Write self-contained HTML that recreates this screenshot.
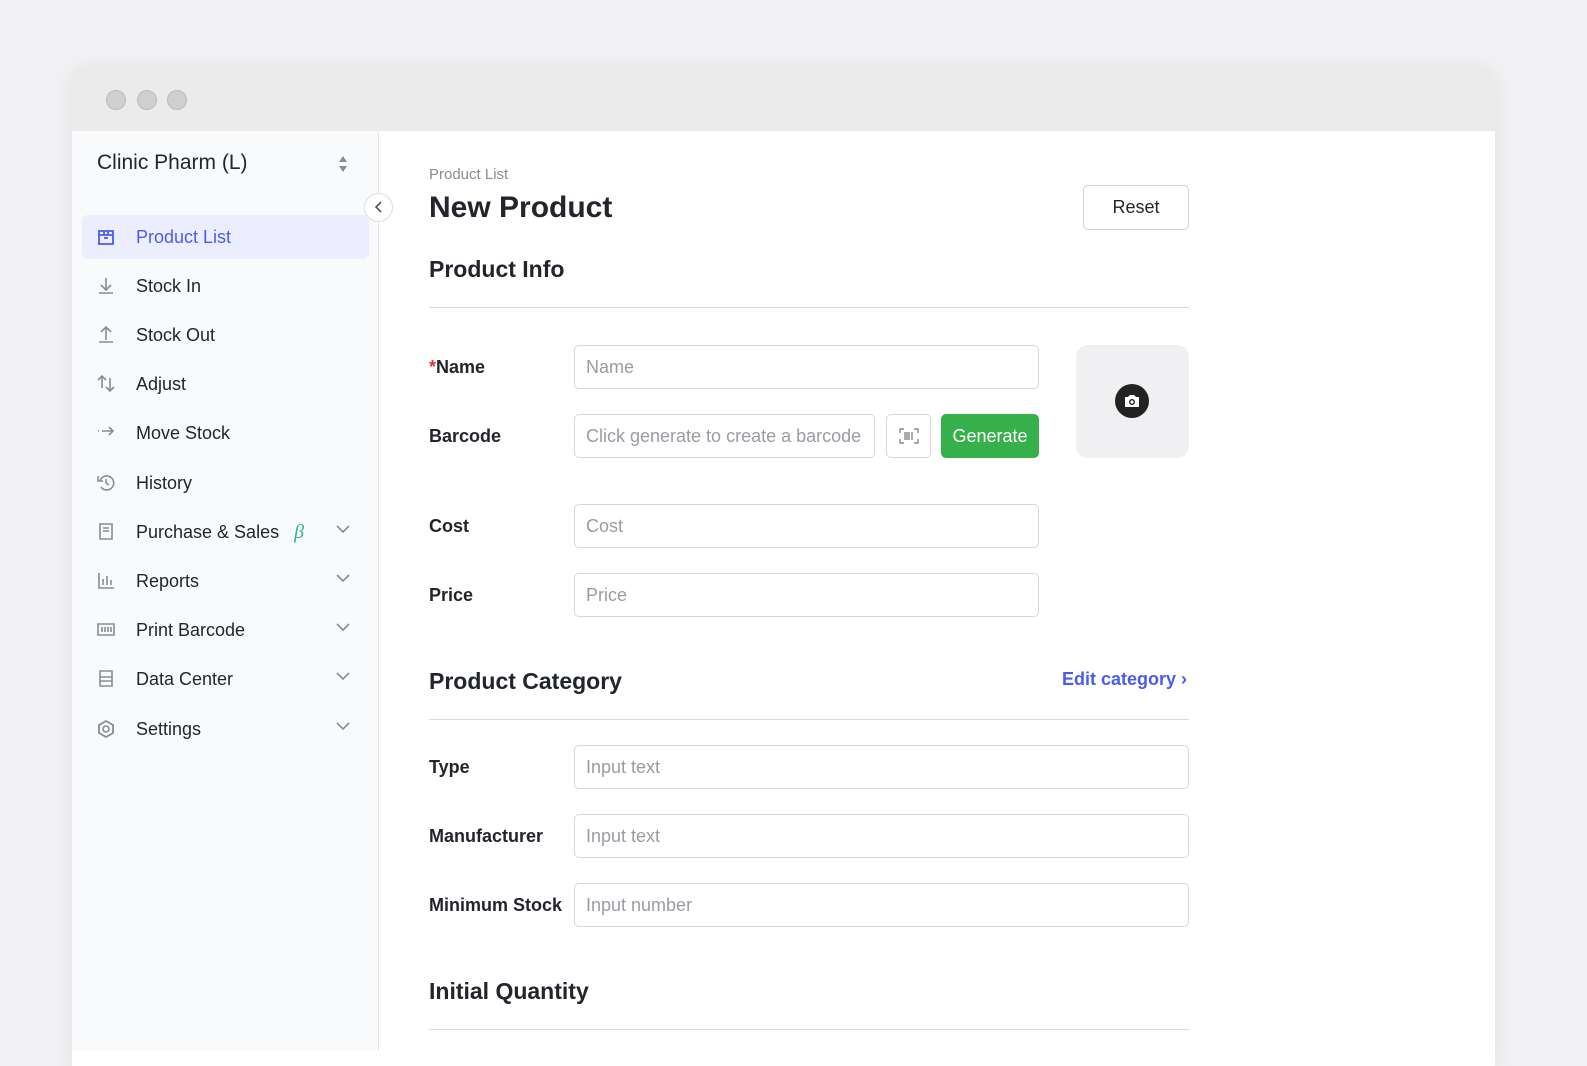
<!DOCTYPE html>
<html><head><meta charset="utf-8"><style>
*{margin:0;padding:0;box-sizing:border-box}
body{width:1587px;height:1051px;background:#f2f2f4;font-family:"Liberation Sans",sans-serif;color:#1f2229;position:relative;overflow:hidden}
.win{position:absolute;left:72px;top:66px;width:1423px;height:1000px;background:#fff;border-radius:14px 14px 0 0;box-shadow:0 4px 24px rgba(0,0,0,.08);overflow:hidden}
.tb{height:65px;background:#ebebeb;position:relative}
.dot{position:absolute;top:24px;width:20px;height:20px;border-radius:50%;background:#d0cece;border:1px solid #bbb}
.side{position:absolute;left:0;top:65px;width:307px;bottom:0;background:#f9fafc;border-right:1px solid #e6e6ea}
.a{position:absolute}
.nav{position:absolute;left:10px;width:287px;height:44px;display:flex;align-items:center;font-size:18px;color:#22252b}
.nav .ic{position:absolute;left:14px;top:12px;width:20px;height:20px}
.nav .t{position:absolute;left:54px}
.nav .chev{position:absolute;left:254px;top:14px}
.act{background:#eceefd;border-radius:6px;color:#4a5cf0}
.lbl{position:absolute;left:429px;font-size:18px;font-weight:bold;color:#22252b}
.inp{position:absolute;height:44px;border:1.5px solid #d6d6dc;border-radius:5px;font-size:18px;color:#9a9ca4;padding-left:11px;display:flex;align-items:center;background:#fff}
.hr{position:absolute;left:429px;width:760px;height:1px;background:#dcdce0}
.h2{position:absolute;left:429px;font-size:23px;font-weight:bold;color:#22252b}
</style></head><body>
<div class="win">
 <div class="tb"><div class="dot" style="left:34px"></div><div class="dot" style="left:65px"></div><div class="dot" style="left:95px"></div></div>
</div>
<div class="side" style="left:72px;top:131px;height:920px;position:absolute"></div>
<div class="a" style="left:97px;top:151px;font-size:21px;color:#22252b">Clinic Pharm (L)</div>
<svg class="a" style="left:337px;top:155px" width="12" height="18"><path d="M6 1L10 7H2Z M6 17L10 11H2Z" fill="#8a8c95"/></svg>
<div class="a" style="left:364px;top:193px;width:29px;height:29px;border-radius:50%;background:#fff;border:1px solid #ddd"></div>
<svg class="a" style="left:372px;top:200px" width="14" height="14"><path d="M9 2L4 7L9 12" stroke="#555" stroke-width="1.6" fill="none"/></svg>

<div class="nav act" style="left:82px;top:215px"><svg class="ic" viewBox="0 0 20 20"><path d="M3 4h14v13H3z M3 8h14 M8 4v4h4V4 M8 11h4" stroke="#4a5cf0" stroke-width="1.8" fill="none"/></svg><span class="t" style="color:#4a5cf0">Product List</span></div>
<div class="nav" style="left:82px;top:264px"><svg class="ic" viewBox="0 0 20 20"><path d="M10 2v11 M5 9l5 5 5-5 M3 17h14" stroke="#8a8c95" stroke-width="1.6" fill="none"/></svg><span class="t">Stock In</span></div>
<div class="nav" style="left:82px;top:313px"><svg class="ic" viewBox="0 0 20 20"><path d="M10 15V3 M5 7l5-5 5 5 M3 17h14" stroke="#8a8c95" stroke-width="1.6" fill="none"/></svg><span class="t">Stock Out</span></div>
<div class="nav" style="left:82px;top:362px"><svg class="ic" viewBox="0 0 20 20"><path d="M6 14V2 M2 6l4-4 4 4 M14 4v13 M10 13l4 4 4-4" stroke="#8a8c95" stroke-width="1.6" fill="none"/></svg><span class="t">Adjust</span></div>
<div class="nav" style="left:82px;top:411px"><svg class="ic" viewBox="0 0 20 20"><path d="M2 8h1 M6 8h11 M13 4l4 4-4 4" stroke="#8a8c95" stroke-width="1.6" fill="none"/></svg><span class="t">Move Stock</span></div>
<div class="nav" style="left:82px;top:461px"><svg class="ic" viewBox="0 0 20 20"><path d="M4 8a7 7 0 1 1 1 6 M2 3v5h5 M10 6v4l3 2" stroke="#8a8c95" stroke-width="1.6" fill="none"/></svg><span class="t">History</span></div>
<div class="nav" style="left:82px;top:510px"><svg class="ic" viewBox="0 0 20 20"><path d="M4 2h12v15H4z M7 6h6 M7 9h6" stroke="#8a8c95" stroke-width="1.6" fill="none"/></svg><span class="t">Purchase &amp; Sales <i style="color:#2fb58a;font-family:'Liberation Serif',serif;font-size:20px;margin-left:10px">β</i></span><svg class="chev" width="14" height="10"><path d="M1 2l6 6 6-6" stroke="#8a8c95" stroke-width="1.6" fill="none"/></svg></div>
<div class="nav" style="left:82px;top:559px"><svg class="ic" viewBox="0 0 20 20"><path d="M3 2v15h15 M7 8v6 M11 5v9 M15 9v5" stroke="#8a8c95" stroke-width="1.6" fill="none"/></svg><span class="t">Reports</span><svg class="chev" width="14" height="10"><path d="M1 2l6 6 6-6" stroke="#8a8c95" stroke-width="1.6" fill="none"/></svg></div>
<div class="nav" style="left:82px;top:608px"><svg class="ic" viewBox="0 0 20 20"><path d="M2 4h16v11H2z M6 7v5 M9 7v5 M12 7v5 M15 7v5" stroke="#8a8c95" stroke-width="1.6" fill="none"/></svg><span class="t">Print Barcode</span><svg class="chev" width="14" height="10"><path d="M1 2l6 6 6-6" stroke="#8a8c95" stroke-width="1.6" fill="none"/></svg></div>
<div class="nav" style="left:82px;top:657px"><svg class="ic" viewBox="0 0 20 20"><path d="M4 2h12v15H4z M4 8h12 M4 12h12" stroke="#8a8c95" stroke-width="1.6" fill="none"/></svg><span class="t">Data Center</span><svg class="chev" width="14" height="10"><path d="M1 2l6 6 6-6" stroke="#8a8c95" stroke-width="1.6" fill="none"/></svg></div>
<div class="nav" style="left:82px;top:707px"><svg class="ic" viewBox="0 0 20 20"><path d="M10 2l7 4v8l-7 4-7-4V6z" stroke="#8a8c95" stroke-width="1.8" fill="none"/><circle cx="10" cy="10" r="3" stroke="#8a8c95" stroke-width="1.6" fill="none"/></svg><span class="t">Settings</span><svg class="chev" width="14" height="10"><path d="M1 2l6 6 6-6" stroke="#8a8c95" stroke-width="1.6" fill="none"/></svg></div>

<div class="a" style="left:429px;top:166px;font-size:15px;color:#8a8c95">Product List</div>
<div class="a" style="left:429px;top:191px;font-size:30px;font-weight:bold;color:#22252b">New Product</div>
<div class="a" style="left:1083px;top:185px;width:106px;height:45px;border:1.5px solid #d0d0d6;border-radius:5px;font-size:18px;display:flex;align-items:center;justify-content:center;color:#22252b">Reset</div>
<div class="h2" style="top:256px">Product Info</div>
<div class="hr" style="top:307px"></div>

<div class="lbl" style="top:357px"><span style="color:#e03030">*</span>Name</div>
<div class="inp" style="left:574px;top:345px;width:465px">Name</div>
<div class="lbl" style="top:426px">Barcode</div>
<div class="inp" style="left:574px;top:414px;width:301px">Click generate to create a barcode</div>
<div class="inp" style="left:886px;top:414px;width:45px;justify-content:center;padding:0"><svg width="20" height="16"><path d="M1 5V1h4 M15 1h4v4 M19 11v4h-4 M5 15H1v-4" stroke="#888" stroke-width="1.4" fill="none"/><path d="M6 4v8 M8 4v8 M10 4v8 M13 4v8" stroke="#888" stroke-width="1.4"/></svg></div>
<div class="a" style="left:941px;top:414px;width:98px;height:44px;background:#36b04a;border-radius:5px;color:#fff;font-size:18px;display:flex;align-items:center;justify-content:center">Generate</div>
<div class="a" style="left:1076px;top:345px;width:113px;height:113px;background:#f0f0f2;border-radius:12px"></div>
<div class="a" style="left:1115px;top:384px;width:34px;height:34px;border-radius:50%;background:#222"></div>
<svg class="a" style="left:1123px;top:393px" width="18" height="16"><path d="M2 4h3l2-2h4l2 2h3v10H2z" fill="#fff"/><circle cx="9" cy="9" r="3" fill="#222"/><circle cx="9" cy="9" r="1.6" fill="#fff"/></svg>

<div class="lbl" style="top:516px">Cost</div>
<div class="inp" style="left:574px;top:504px;width:465px">Cost</div>
<div class="lbl" style="top:585px">Price</div>
<div class="inp" style="left:574px;top:573px;width:465px">Price</div>

<div class="h2" style="top:668px">Product Category</div>
<div class="a" style="left:1062px;top:669px;font-size:18px;font-weight:bold;color:#4a5cf0">Edit category ›</div>
<div class="hr" style="top:719px"></div>
<div class="lbl" style="top:757px">Type</div>
<div class="inp" style="left:574px;top:745px;width:615px">Input text</div>
<div class="lbl" style="top:826px">Manufacturer</div>
<div class="inp" style="left:574px;top:814px;width:615px">Input text</div>
<div class="lbl" style="top:895px">Minimum Stock</div>
<div class="inp" style="left:574px;top:883px;width:615px">Input number</div>
<div class="h2" style="top:978px">Initial Quantity</div>
<div class="hr" style="top:1029px"></div>
</body></html>
